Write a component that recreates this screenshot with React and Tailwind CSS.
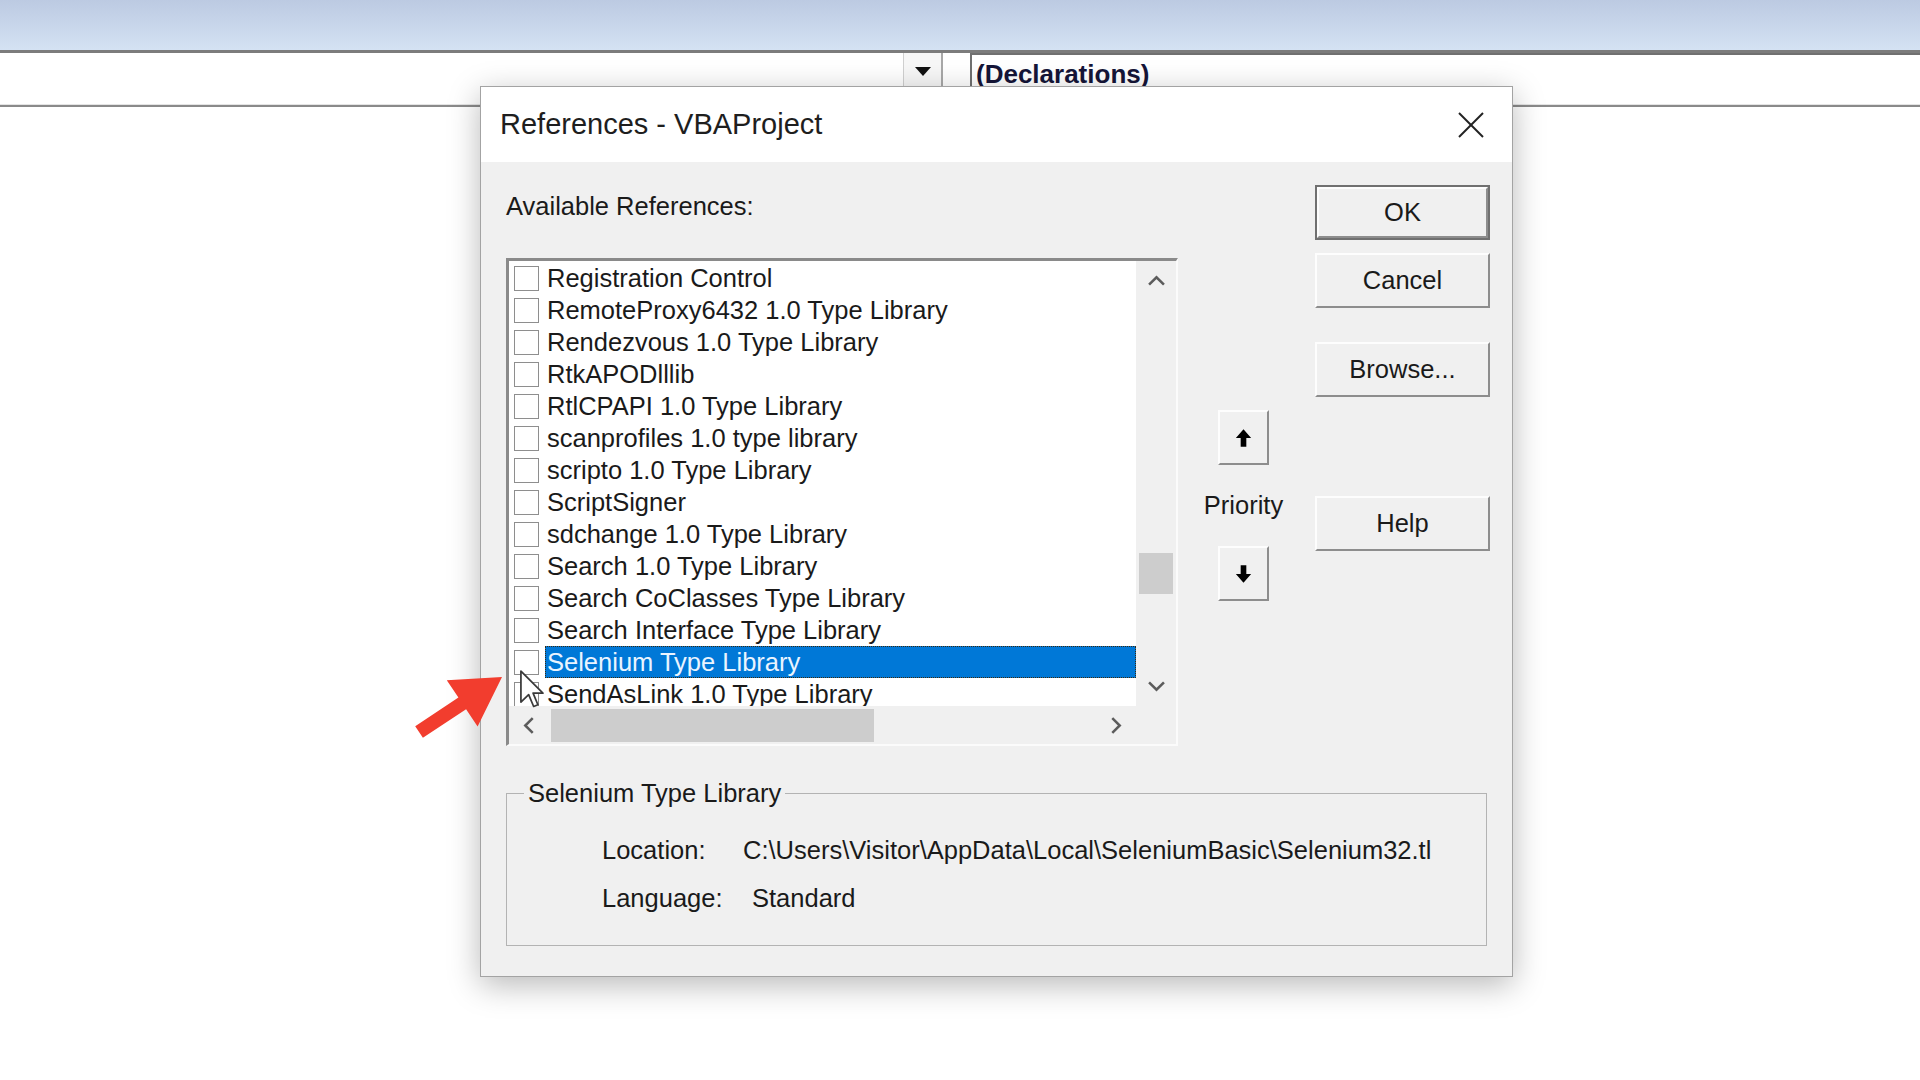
import React from 'react';

const references = [
  'Registration Control',
  'RemoteProxy6432 1.0 Type Library',
  'Rendezvous 1.0 Type Library',
  'RtkAPODlllib',
  'RtlCPAPI 1.0 Type Library',
  'scanprofiles 1.0 type library',
  'scripto 1.0 Type Library',
  'ScriptSigner',
  'sdchange 1.0 Type Library',
  'Search 1.0 Type Library',
  'Search CoClasses Type Library',
  'Search Interface Type Library',
  'Selenium Type Library',
  'SendAsLink 1.0 Type Library',
];

const Chevron = ({ dir }) => {
  const points = {
    up: '1,9 8,2 15,9',
    down: '1,2 8,9 15,2',
    left: '9,1 2,8 9,15',
    right: '2,1 9,8 2,15',
  }[dir];
  const vertical = dir === 'up' || dir === 'down';
  return (
    <svg
      width={vertical ? 17 : 12}
      height={vertical ? 12 : 17}
      viewBox={vertical ? '0 0 16 11' : '0 0 11 16'}
      fill="none"
      stroke="#5c5c5c"
      strokeWidth="2.4"
    >
      <polyline points={points} />
    </svg>
  );
};

const Button = ({ children, primary, className = '' }) => (
  <div className={`${primary ? 'border-2 border-[#707070]' : ''} ${className}`}>
    <div className="h-full flex items-center justify-center bg-[#f0f0f0] border-t-2 border-l-2 border-r-2 border-b-2 border-t-[#fdfdfd] border-l-[#fdfdfd] border-r-[#8d8d8d] border-b-[#8d8d8d]">
      {children}
    </div>
  </div>
);

const Arrow = ({ down }) => (
  <svg width="17" height="20" viewBox="0 0 14 17" className={down ? 'rotate-180' : ''}>
    <path d="M7 1 L13.5 8.5 H9.4 V16 H4.6 V8.5 H0.5 Z" fill="#000" />
  </svg>
);

export default function App() {
  return (
    <div
      className="relative w-[1920px] h-[1080px] bg-white overflow-hidden text-[#1a1a1a]"
      style={{ fontFamily: '"Liberation Sans", Arial, sans-serif' }}
    >
      {/* editor toolbar behind the dialog */}
      <div className="h-[50px] bg-linear-to-b from-[#bccae2] to-[#d4e2f3]" />
      <div className="h-[3px] bg-[#7c7c7c]" />
      <div className="h-[51px] flex items-start">
        <div className="w-[943px] h-[36px] flex justify-end border-r-2 border-[#a8a8a8]">
          <div className="w-[38px] h-full flex items-center justify-center border-l border-[#d0d0d0] bg-[#f7f7f7]">
            <svg width="16" height="9" viewBox="0 0 16 9">
              <path d="M0 0 H16 L8 9 Z" fill="#111" />
            </svg>
          </div>
        </div>
        <div className="ml-[27px] flex-1 h-[40px] border-t-2 border-l-2 border-[#707070] pl-[4px] leading-[38px] text-[26px] font-bold text-[#151538]">
          (Declarations)
        </div>
      </div>
      <div className="h-[1px] bg-[#e4e4e4]" />
      <div className="h-[2px] bg-[#8a8a8a]" />

      {/* References dialog */}
      <div className="absolute left-[480px] top-[86px] w-[1033px] h-[891px] border border-[#a3a3a3] bg-[#f0f0f0] shadow-[0_8px_30px_rgba(0,0,0,0.28)] flex flex-col">
        <div className="h-[75px] bg-white flex items-center justify-between pl-[19px] pr-[28px]">
          <span className="text-[29px] text-[#1e1e1e]">References - VBAProject</span>
          <svg width="26" height="26" viewBox="0 0 26 26" stroke="#222" strokeWidth="2">
            <line x1="1" y1="1" x2="25" y2="25" />
            <line x1="25" y1="1" x2="1" y2="25" />
          </svg>
        </div>

        <div className="flex-1 pl-[25px] pr-[22px] text-[25.5px]">
          <div className="flex pt-[23px]">
            {/* list column */}
            <div className="w-[672px]">
              <div className="mt-[6px] h-[30px] leading-[30px]">Available References:</div>
              <div className="mt-[37px] h-[488px] border-t-[3px] border-l-[3px] border-r-2 border-b-2 border-t-[#8a8a8a] border-l-[#8a8a8a] border-r-[#fbfbfb] border-b-[#fbfbfb] grid grid-cols-[1fr_40px] grid-rows-[1fr_38px] overflow-hidden">
                <div className="bg-white pt-[1px] overflow-hidden">
                  {references.map((name) => {
                    const selected = name === 'Selenium Type Library';
                    return (
                      <div key={name} className="h-[32px] flex items-center pl-[5px]">
                        <div className="w-[25px] h-[25px] shrink-0 border border-[#8e8e8e] bg-white" />
                        {selected ? (
                          <div className="ml-[6px] flex-1 h-[32px] bg-[#0078d7] border border-dotted border-[#3a2a10] px-[1px] leading-[30px] text-[#eaf4ff] whitespace-nowrap">
                            {name}
                          </div>
                        ) : (
                          <div className="ml-[6px] px-[2px] leading-[32px] whitespace-nowrap">{name}</div>
                        )}
                      </div>
                    );
                  })}
                </div>
                <div className="bg-[#f0f0f0] flex flex-col">
                  <div className="h-[40px] flex items-center justify-center">
                    <Chevron dir="up" />
                  </div>
                  <div className="flex-1 px-[3px]">
                    <div className="mt-[252px] h-[41px] bg-[#cdcdcd]" />
                  </div>
                  <div className="h-[40px] flex items-center justify-center">
                    <Chevron dir="down" />
                  </div>
                </div>
                <div className="bg-[#f0f0f0] flex items-center">
                  <div className="w-[40px] h-full flex items-center justify-center">
                    <Chevron dir="left" />
                  </div>
                  <div className="ml-[2px] w-[323px] h-[33px] bg-[#cdcdcd]" />
                  <div className="flex-1" />
                  <div className="w-[40px] h-full flex items-center justify-center">
                    <Chevron dir="right" />
                  </div>
                </div>
                <div className="bg-[#f0f0f0]" />
              </div>
            </div>

            {/* priority column */}
            <div className="ml-[40px] w-[51px] flex flex-col items-center">
              <Button className="mt-[225px] w-[51px] h-[55px]">
                <Arrow />
              </Button>
              <div className="h-[81px] flex items-center justify-center">Priority</div>
              <Button className="w-[51px] h-[55px]">
                <Arrow down />
              </Button>
            </div>

            {/* command buttons */}
            <div className="ml-[46px] w-[175px] flex flex-col">
              <Button primary className="h-[55px]">OK</Button>
              <Button className="mt-[13px] h-[55px]">Cancel</Button>
              <Button className="mt-[34px] h-[55px]">Browse...</Button>
              <Button className="mt-[99px] h-[55px]">Help</Button>
            </div>
          </div>

          <fieldset className="mt-[32px] w-[981px] border border-[#b3b3b3] pb-[32px]">
            <legend className="ml-[17px] px-[4px] leading-[30px]">Selenium Type Library</legend>
            <div className="pl-[95px] pt-[27px]">
              <div className="flex h-[30px] leading-[30px]">
                <span className="w-[141px] shrink-0">Location:</span>
                <span className="whitespace-nowrap">C:\Users\Visitor\AppData\Local\SeleniumBasic\Selenium32.tl</span>
              </div>
              <div className="flex h-[30px] leading-[30px] mt-[18px]">
                <span className="w-[150px] shrink-0">Language:</span>
                <span>Standard</span>
              </div>
            </div>
          </fieldset>
        </div>
      </div>

      {/* red annotation arrow */}
      <svg className="absolute left-[400px] top-[660px]" width="120" height="90" viewBox="400 660 120 90">
        <polygon
          points="502,677 477.6,726.6 466.1,709.2 422.9,737.8 415.2,726.2 458.4,697.6 446.8,680.2"
          fill="#f23d2e"
        />
      </svg>

      {/* mouse cursor */}
      <svg className="absolute left-[519px] top-[669px]" width="27" height="41" viewBox="-1 -1 14 21">
        <path d="M0 0 V16 L4 12.2 L6.6 18.3 L8.8 17.4 L6.3 11.4 H11.4 Z" fill="#fff" stroke="#3a3a3a" strokeWidth="0.9" strokeLinejoin="round" />
      </svg>
    </div>
  );
}
